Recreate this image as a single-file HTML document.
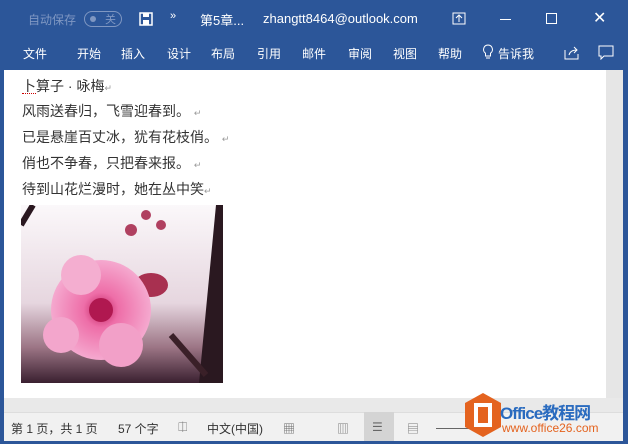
<!DOCTYPE html>
<html><head><meta charset="utf-8"><style>
*{margin:0;padding:0;box-sizing:border-box}
body{width:628px;height:444px;overflow:hidden;background:#2c5699;font-family:"Liberation Sans","Noto Sans CJK SC",sans-serif;position:relative}
.t{position:absolute;color:#fff;font-size:13px;white-space:nowrap}
.tab{position:absolute;top:45px;color:#fff;font-size:12px}
#doc{position:absolute;left:4px;top:70px;width:602px;height:328px;background:#fff}
#sb{position:absolute;left:606px;top:70px;width:17px;height:328px;background:#e6e6e6}
#gray{position:absolute;left:4px;top:398px;width:619px;height:14px;background:#e9e9e9}
#status{position:absolute;left:4px;top:412px;width:619px;height:29px;background:#f1f1f1;border-top:1px solid #ddd}
.s{position:absolute;top:420px;font-size:12px;color:#333}
.line{position:absolute;left:22px;font-size:14px;color:#333}
.pm{color:#999;font-size:9px}
</style></head><body>
<div class="t" style="left:28px;top:11px;color:#7f97c2;font-size:12px">自动保存</div>
<div style="position:absolute;left:84px;top:11px;width:38px;height:16px;border:1px solid #7f97c2;border-radius:8px"></div>
<div style="position:absolute;left:90px;top:16px;width:6px;height:6px;border-radius:3px;background:#7f97c2"></div>
<div class="t" style="left:105px;top:11px;color:#7f97c2;font-size:11px">关</div>
<svg style="position:absolute;left:139px;top:12px" width="14" height="14"><rect x="1" y="1" width="12" height="12" fill="none" stroke="#fff" stroke-width="1.5"/><rect x="4" y="1" width="6" height="4" fill="#fff"/><rect x="4" y="8" width="6" height="5" fill="#fff"/></svg>
<div class="t" style="left:170px;top:10px;font-size:11px">»</div>
<div class="t" style="left:200px;top:10px">第5章...</div>
<div class="t" style="left:263px;top:11px">zhangtt8464@outlook.com</div>
<svg style="position:absolute;left:452px;top:12px" width="14" height="13"><rect x="1" y="1" width="12" height="11" fill="none" stroke="#fff"/><path d="M7 10V4M4 6l3-3 3 3" stroke="#fff" fill="none"/></svg>
<div style="position:absolute;left:500px;top:19px;width:11px;height:1px;background:#fff"></div>
<div style="position:absolute;left:546px;top:13px;width:11px;height:11px;border:1px solid #fff"></div>
<div class="t" style="left:593px;top:8px;font-size:16px">✕</div>
<div class="tab" style="left:23px">文件</div><div class="tab" style="left:77px">开始</div><div class="tab" style="left:121px">插入</div><div class="tab" style="left:167px">设计</div><div class="tab" style="left:211px">布局</div><div class="tab" style="left:257px">引用</div><div class="tab" style="left:302px">邮件</div><div class="tab" style="left:348px">审阅</div><div class="tab" style="left:393px">视图</div><div class="tab" style="left:438px">帮助</div>
<svg style="position:absolute;left:482px;top:44px" width="12" height="16"><path d="M6 1a4.5 4.5 0 0 0-2.5 8.2V12h5V9.2A4.5 4.5 0 0 0 6 1zM4 14h4" stroke="#fff" fill="none"/></svg>
<div class="tab" style="left:498px">告诉我</div>
<svg style="position:absolute;left:564px;top:45px" width="16" height="15"><path d="M1 5v9h13v-5M5 10c1-4 4-5 8-5M10 2l3 3-3 3" stroke="#fff" fill="none"/></svg>
<svg style="position:absolute;left:598px;top:45px" width="16" height="15"><path d="M1 1h14v10H6l-3 3v-3H1z" stroke="#fff" fill="none"/></svg>
<div id="doc"></div><div id="sb"></div><div id="gray"></div><div id="status"></div>
<div class="line" style="top:76px">卜算子 · 咏梅<span class="pm">↵</span></div>
<div style="position:absolute;left:22px;top:93px;width:14px;border-bottom:1px dotted #c00"></div>
<div class="line" style="top:101px">风雨送春归，飞雪迎春到。 <span class="pm">↵</span></div>
<div class="line" style="top:127px">已是悬崖百丈冰，犹有花枝俏。 <span class="pm">↵</span></div>
<div class="line" style="top:153px">俏也不争春，只把春来报。 <span class="pm">↵</span></div>
<div class="line" style="top:179px">待到山花烂漫时，她在丛中笑<span class="pm">↵</span></div>
<svg style="position:absolute;left:21px;top:205px" width="202" height="178">
<defs><linearGradient id="bg" x1="0" y1="0" x2="0" y2="1"><stop offset="0" stop-color="#fbf8fa"/><stop offset="0.55" stop-color="#e6d6df"/><stop offset="0.8" stop-color="#9c7585"/><stop offset="1" stop-color="#3a2030"/></linearGradient>
<radialGradient id="fl" cx="0.5" cy="0.5" r="0.5"><stop offset="0" stop-color="#c02060"/><stop offset="0.35" stop-color="#ee6ea8"/><stop offset="1" stop-color="#f5a9cf"/></radialGradient></defs>
<rect width="202" height="178" fill="url(#bg)"/>
<path d="M195 0L178 178H202V0z" fill="#2a1820"/>
<path d="M150 130l35 40" stroke="#3a2028" stroke-width="6"/>
<path d="M0 20L12 0" stroke="#2a1820" stroke-width="6"/>
<ellipse cx="130" cy="80" rx="17" ry="12" fill="#a83050"/>
<circle cx="110" cy="25" r="6" fill="#b04060"/><circle cx="140" cy="20" r="5" fill="#b04060"/><circle cx="125" cy="10" r="5" fill="#b04060"/>
<circle cx="80" cy="105" r="50" fill="url(#fl)"/>
<circle cx="40" cy="130" r="18" fill="#f3a6cc"/><circle cx="100" cy="140" r="22" fill="#f2a0c8"/><circle cx="60" cy="70" r="20" fill="#f4aed0"/>
<circle cx="80" cy="105" r="12" fill="#b01850"/>
</svg>
<div class="s" style="left:11px">第 1 页，共 1 页</div>
<div class="s" style="left:118px">57 个字</div>
<div class="s" style="left:178px;color:#777">⎅</div>
<div class="s" style="left:207px">中文(中国)</div>
<div class="s" style="left:283px;color:#666">▦</div>
<div style="position:absolute;left:364px;top:412px;width:30px;height:29px;background:#d4d4d4"></div>
<div class="s" style="left:337px;color:#777">▥</div>
<div class="s" style="left:372px;color:#666">☰</div>
<div class="s" style="left:407px;color:#777">▤</div>
<div style="position:absolute;left:436px;top:428px;width:60px;height:1px;background:#666"></div>
<svg style="position:absolute;left:463px;top:392px" width="40" height="46"><path d="M20 1l18 10v24L20 45 2 35V11z" fill="#e4631f"/><rect x="13" y="13" width="14" height="20" fill="none" stroke="#fff" stroke-width="4"/></svg>
<div style="position:absolute;left:500px;top:399px;font-size:17px;font-weight:bold;color:#2a6bbf;letter-spacing:-1px">Office教程网</div>
<div style="position:absolute;left:502px;top:421px;font-size:12px;color:#e4631f">www.office26.com</div>
</body></html>
